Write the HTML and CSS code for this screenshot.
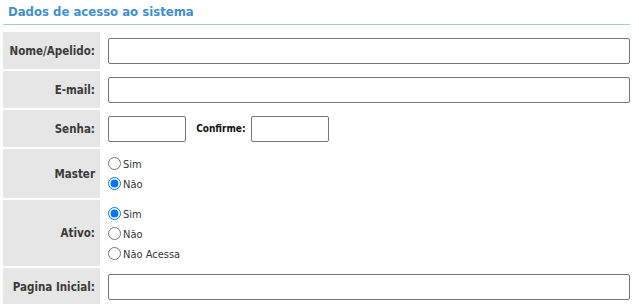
FILE: index.html
```html
<!DOCTYPE html>
<html lang="pt">
<head>
    <meta charset="UTF-8">
    <title>Dados de acesso ao sistema</title>
    <link rel="stylesheet" href="styles.css">
</head>
<body>
    <div class="box">
        <h2 class="titulo">Dados de acesso ao sistema</h2>
        <table class="form">
            <tr>
                <th>Nome/Apelido:</th>
                <td><input type="text" class="largo"></td>
            </tr>
            <tr>
                <th>E-mail:</th>
                <td><input type="text" class="largo"></td>
            </tr>
            <tr>
                <th>Senha:</th>
                <td>
                    <input type="password" class="curto">
                    <span class="conf">Confirme:</span>
                    <input type="password" class="curto">
                </td>
            </tr>
            <tr class="alto">
                <th>Master</th>
                <td class="opcoes">
                    <label><input type="radio" name="master">Sim</label>
                    <label><input type="radio" name="master" checked>Não</label>
                </td>
            </tr>
            <tr class="alto">
                <th>Ativo:</th>
                <td class="opcoes">
                    <label><input type="radio" name="ativo" checked>Sim</label>
                    <label><input type="radio" name="ativo">Não</label>
                    <label><input type="radio" name="ativo">Não Acessa</label>
                </td>
            </tr>
            <tr>
                <th>Pagina Inicial:</th>
                <td><input type="text" class="largo"></td>
            </tr>
        </table>
    </div>
</body>
</html>
```

FILE: styles.css
```css
body {
    margin: 0;
    font-family: "DejaVu Sans Condensed", "DejaVu Sans", sans-serif;
    font-size: 11px;
    color: #333;
    background: #fff;
}

.box {
    padding: 0 9px 0 3px;
}

.titulo {
    margin: 0;
    padding: 4px 5px 5px;
    font-size: 13px;
    font-weight: bold;
    color: #3f8fd0;
    border-bottom: 1px solid #9fcfdc;
}

.form {
    width: 100%;
    border-collapse: separate;
    border-spacing: 0 2px;
    margin-top: 5px;
}

.form th {
    width: 97px;
    height: 37px;
    padding: 0 5px 0 0;
    box-sizing: border-box;
    background: #e6e6e6;
    text-align: right;
    font-size: 11.5px;
    font-weight: bold;
    color: #3a3a3a;
}

.form td {
    padding: 0 0 0 8px;
}

.form tr.alto th {
    height: 49px;
}

.form tr.alto + tr.alto th {
    height: 66px;
}

input[type=text], input[type=password] {
    height: 26px;
    box-sizing: border-box;
    border: 1px solid #767676;
    border-radius: 2px;
    margin: 0;
    vertical-align: middle;
}

.largo {
    width: 100%;
}

.curto {
    width: 78px;
}

.conf {
    font-weight: bold;
    font-size: 10px;
    margin: 0 2px 0 7px;
    color: #111;
    vertical-align: middle;
}

.opcoes {
    padding-top: 3px !important;
}

.opcoes label {
    display: block;
    line-height: 20px;
}

.opcoes input {
    margin: 0 2px 0 0;
    vertical-align: -2px;
}
```
